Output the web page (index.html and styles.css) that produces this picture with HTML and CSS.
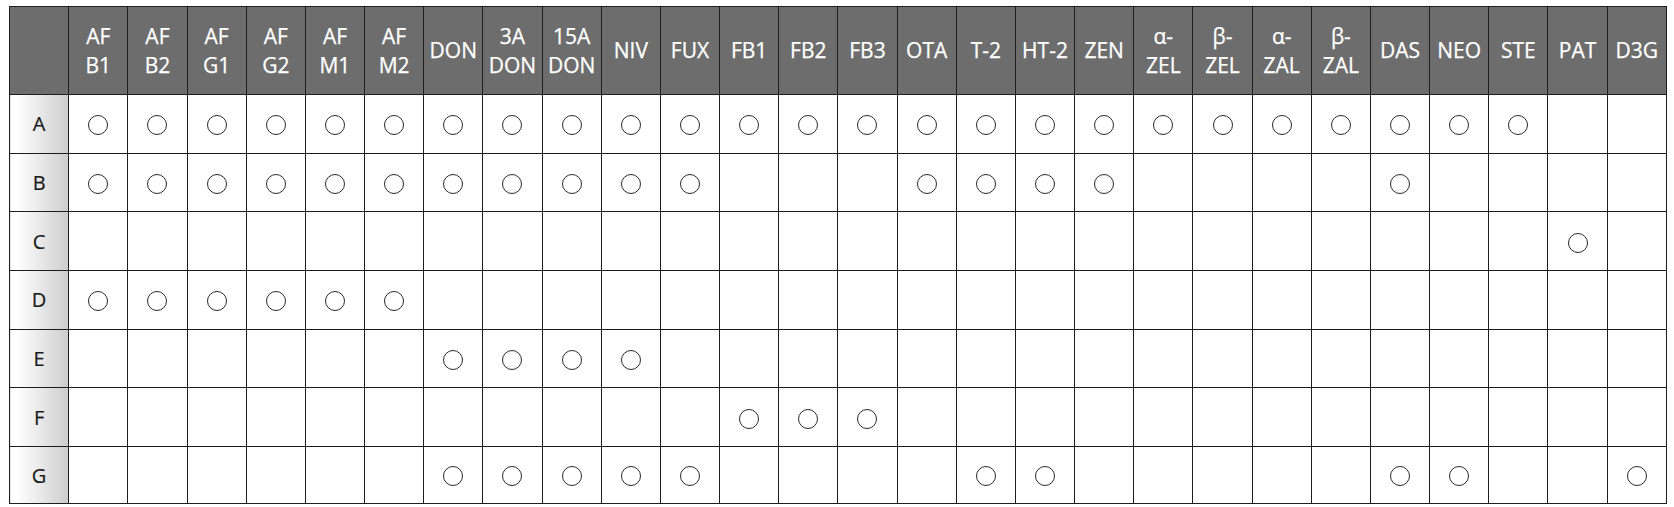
FILE: index.html
```html
<!DOCTYPE html>
<html>
<head>
<meta charset="utf-8">
<link rel="stylesheet" href="styles.css">
</head>
<body>
<table class="grid">
  <colgroup>
    <col class="c-label">
  </colgroup>
  <thead>
    <tr class="head">
      <th class="corner"></th>
      <th>AF<br>B1</th><th>AF<br>B2</th><th>AF<br>G1</th><th>AF<br>G2</th><th>AF<br>M1</th><th>AF<br>M2</th>
      <th>DON</th><th>3A<br>DON</th><th>15A<br>DON</th><th>NIV</th><th>FUX</th>
      <th>FB1</th><th>FB2</th><th>FB3</th><th>OTA</th><th>T-2</th><th>HT-2</th><th>ZEN</th>
      <th>α-<br>ZEL</th><th>β-<br>ZEL</th><th>α-<br>ZAL</th><th>β-<br>ZAL</th>
      <th>DAS</th><th>NEO</th><th>STE</th><th>PAT</th><th>D3G</th>
    </tr>
  </thead>
  <tbody id="body"></tbody>
</table>
<script src="app.js"></script>
</body>
</html>
```
FILE: styles.css
```css
html, body {
  margin: 0;
  padding: 0;
  background: #ffffff;
}
body {
  padding: 6px 0 0 9px;
  font-family: "Open Sans", "Liberation Sans", sans-serif;
}
.grid {
  border-collapse: collapse;
  table-layout: fixed;
  width: 1658px;
}
.grid th, .grid td {
  border: 1.4px solid #1e1e1e;
  padding: 0;
  text-align: center;
  vertical-align: middle;
}
.head th {
  background: #6d6d6d;
  color: #ffffff;
  font-weight: 400;
  font-size: 21px;
  line-height: 29px;
  height: 87px;
  -webkit-text-stroke: 0.25px #ffffff;
}
.grid tbody tr {
  height: 58.7px;
}
.grid tbody tr.last {
  height: 57px;
}
.label {
  background: linear-gradient(to right, #ffffff 10%, #cdcdcd 100%);
  color: #1a1a1a;
  font-size: 20px;
  -webkit-text-stroke: 0.2px #1a1a1a;
}
.dot {
  display: inline-block;
  width: 18px;
  height: 18px;
  border: 1.4px solid #2a2a2a;
  border-radius: 50%;
  vertical-align: middle;
}
```
FILE: app.js
```js
var rows = {
  A: [1,2,3,4,5,6,7,8,9,10,11,12,13,14,15,16,17,18,19,20,21,22,23,24,25],
  B: [1,2,3,4,5,6,7,8,9,10,11,15,16,17,18,23],
  C: [26],
  D: [1,2,3,4,5,6],
  E: [7,8,9,10],
  F: [12,13,14],
  G: [7,8,9,10,11,16,17,23,24,27]
};
var body = document.getElementById('body');
var keys = Object.keys(rows);
keys.forEach(function (k, idx) {
  var tr = document.createElement('tr');
  if (idx === keys.length - 1) tr.className = 'last';
  var th = document.createElement('td');
  th.className = 'label';
  th.textContent = k;
  tr.appendChild(th);
  for (var c = 1; c <= 27; c++) {
    var td = document.createElement('td');
    if (rows[k].indexOf(c) !== -1) {
      var s = document.createElement('span');
      s.className = 'dot';
      td.appendChild(s);
    }
    tr.appendChild(td);
  }
  body.appendChild(tr);
});
```
